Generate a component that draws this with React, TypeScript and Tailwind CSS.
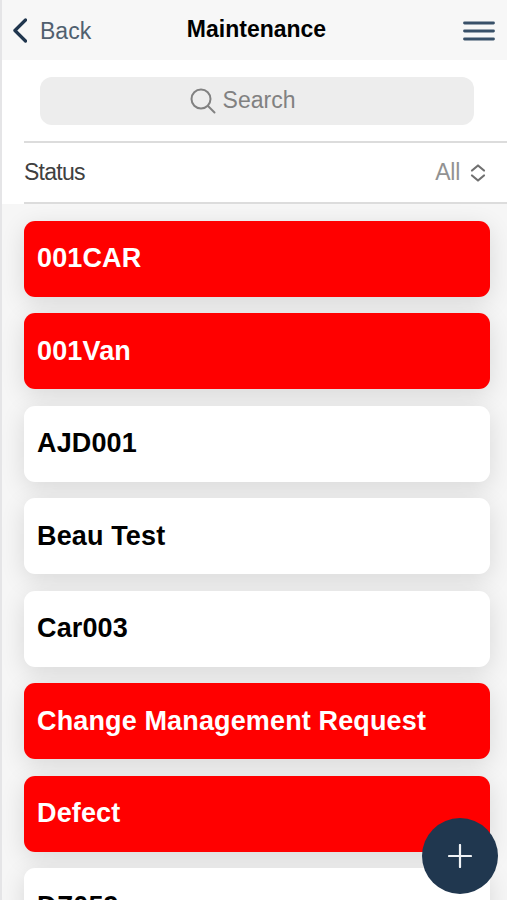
import React from "react";

const items = [
  { name: "001CAR", alert: true },
  { name: "001Van", alert: true },
  { name: "AJD001", alert: false },
  { name: "Beau Test", alert: false },
  { name: "Car003", alert: false },
  { name: "Change Management Request", alert: true },
  { name: "Defect", alert: true },
  { name: "DZ059", alert: false },
];

const Header = () => (
  <header className="grid h-[60px] grid-cols-[1fr_auto_1fr] items-center bg-[#f7f7f7] pl-[10px] pr-3">
    <button className="flex items-center text-[#50606f]">
      <svg
        className="h-[25px] w-[15px]"
        viewBox="0 0 15 25"
        fill="none"
        stroke="#20364e"
        strokeWidth="3.2"
        strokeLinecap="round"
        strokeLinejoin="round"
      >
        <path d="M13.5 2 2.9 12.5l10.6 10.5" />
      </svg>
      <span className="ml-[13px] pt-[2px] text-[23px] leading-none">Back</span>
    </button>
    <h1 className="pb-px pl-[6px] text-[23px] font-bold leading-none">
      Maintenance
    </h1>
    <button className="justify-self-end pt-px">
      <svg
        className="h-5 w-8"
        viewBox="0 0 32 20"
        stroke="#385068"
        strokeWidth="2.8"
        strokeLinecap="round"
      >
        <path d="M1.5 2h29M1.5 10h29M1.5 18h29" />
      </svg>
    </button>
  </header>
);

const SearchBar = () => (
  <div className="h-[81px] bg-white pl-[38px] pr-[33px] pt-[17px]">
    <div className="flex h-12 items-center justify-center rounded-[12px] bg-[#ededed] pr-[29px] text-[#818181]">
      <svg
        className="h-[26px] w-[26px]"
        viewBox="0 0 26 26"
        fill="none"
        stroke="currentColor"
        strokeWidth="2"
        strokeLinecap="round"
      >
        <circle cx="11" cy="11" r="9.5" />
        <path d="m18 18 6.5 6.5" />
      </svg>
      <span className="ml-[7px] pb-[2px] text-[23px] leading-none">Search</span>
    </div>
  </div>
);

const StatusFilter = () => (
  <div className="bg-white pl-[22px]">
    <div className="flex h-[63px] items-center justify-between border-y-2 border-[#dcdcdc] pr-[21px]">
      <span className="text-[23px] leading-none tracking-[-0.75px] text-[#404040]">
        Status
      </span>
      <div className="flex items-center text-[#929292]">
        <span className="text-[23px] leading-none tracking-[-0.3px]">All</span>
        <svg
          className="ml-[10px] h-[18px] w-4"
          viewBox="0 0 16 18"
          fill="none"
          stroke="#707070"
          strokeWidth="2.2"
          strokeLinecap="round"
          strokeLinejoin="round"
        >
          <path d="M2 6.5 8 1.5l6 5M2 11.5l6 5 6-5" />
        </svg>
      </div>
    </div>
  </div>
);

const ItemCard = ({ name, alert }: { name: string; alert: boolean }) => (
  <li
    className={`flex h-[76px] shrink-0 items-center rounded-[11px] px-[13.5px] text-[27px] font-bold tracking-[0.14px] shadow-[0_6px_24px_rgba(0,0,0,0.12)] ${
      alert ? "bg-[#ff0000] text-white" : "bg-white text-black"
    }`}
  >
    {name}
  </li>
);

export default function App() {
  return (
    <div className="relative flex h-[900px] w-[507px] flex-col overflow-hidden border-l-2 border-[#e5e5e7] bg-[#f6f6f6] font-['Liberation_Sans',Arial,sans-serif] text-black">
      <Header />
      <SearchBar />
      <StatusFilter />
      <ul className="flex min-h-0 flex-1 flex-col gap-[16.5px] overflow-hidden pl-[21.5px] pr-[17px] pt-[16.6px]">
        {items.map((item) => (
          <ItemCard key={item.name} name={item.name} alert={item.alert} />
        ))}
      </ul>
      <button className="absolute bottom-[6px] right-[9px] flex h-[76px] w-[76px] items-center justify-center rounded-full bg-[#20374f]">
        <svg
          className="h-6 w-6"
          viewBox="0 0 24 24"
          stroke="#f0f3f6"
          strokeWidth="2.2"
          strokeLinecap="round"
        >
          <path d="M12 1v22M1 12h22" />
        </svg>
      </button>
    </div>
  );
}
